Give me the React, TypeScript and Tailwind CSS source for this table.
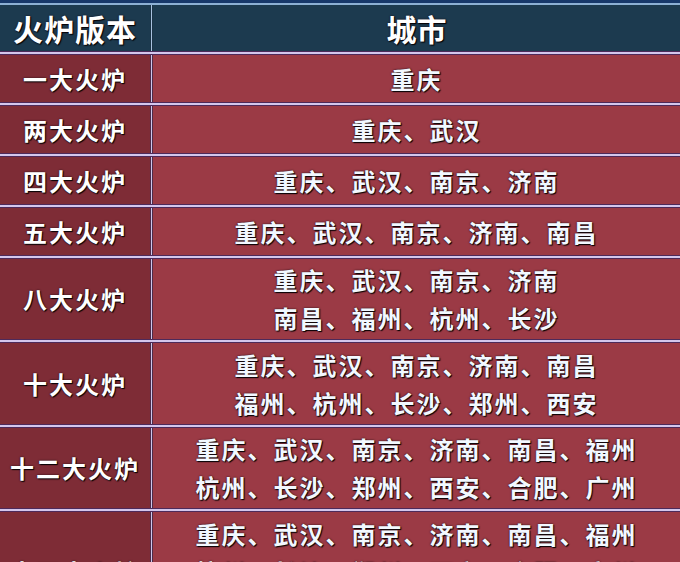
const rows: { label: string; lines: string[]; h: string }[] = [
  { label: "一大火炉", lines: ["重庆"], h: "h-[47px]" },
  { label: "两大火炉", lines: ["重庆、武汉"], h: "h-[47px]" },
  { label: "四大火炉", lines: ["重庆、武汉、南京、济南"], h: "h-[47px]" },
  { label: "五大火炉", lines: ["重庆、武汉、南京、济南、南昌"], h: "h-[47px]" },
  {
    label: "八大火炉",
    lines: ["重庆、武汉、南京、济南", "南昌、福州、杭州、长沙"],
    h: "h-[80px]",
  },
  {
    label: "十大火炉",
    lines: ["重庆、武汉、南京、济南、南昌", "福州、杭州、长沙、郑州、西安"],
    h: "h-[81px]",
  },
  {
    label: "十二大火炉",
    lines: ["重庆、武汉、南京、济南、南昌、福州", "杭州、长沙、郑州、西安、合肥、广州"],
    h: "h-[80px]",
  },
  {
    label: "十四大火炉",
    lines: [
      "重庆、武汉、南京、济南、南昌、福州",
      "杭州、长沙、郑州、西安、合肥、广州",
      "南宁、海口",
    ],
    h: "h-[120px]",
  },
];

const shadow = "[text-shadow:0_0_2px_#1a0a10,1px_1px_1px_#000]";

function Separator() {
  return <div className="h-[4px] bg-[#d4c6ec] border-y border-[#4d2a5a]" />;
}

function Divider({ dark }: { dark?: boolean }) {
  return (
    <div
      className={
        dark
          ? "w-[3px] bg-[#a9c2e0] border-x border-[#1a3346]"
          : "w-[3px] bg-[#cfc6ea] border-x border-[#4d2a48]"
      }
    />
  );
}

export default function App() {
  return (
    <div className="w-[680px] h-[562px] overflow-hidden bg-[#9a3a44] font-['Noto_Sans_CJK_SC',sans-serif] font-bold text-white">
      <div className="h-[3px] bg-[#17386a]" />
      <div className="h-[2px] bg-[#8cb0d4]" />

      <div className="flex h-[46px] bg-[#1c3a4f]">
        <div
          className={`w-[150px] flex items-center justify-center text-[30px] tracking-[1px] ${shadow}`}
        >
          火炉版本
        </div>
        <Divider dark />
        <div
          className={`flex-1 flex items-center justify-center text-[30px] ${shadow}`}
        >
          城市
        </div>
      </div>

      {rows.map((row) => (
        <div key={row.label}>
          <Separator />
          <div className={`flex ${row.h}`}>
            <div
              className={`w-[150px] flex items-center justify-center bg-[#7e2c36] text-[24px] tracking-[2px] ${shadow}`}
            >
              {row.label}
            </div>
            <Divider />
            <div className="flex-1 flex flex-col items-center justify-center bg-[#9b3a45]">
              {row.lines.map((line) => (
                <div
                  key={line}
                  className={`text-[24px] leading-[38px] tracking-[2px] text-[#f2f8ff] ${shadow}`}
                >
                  {line}
                </div>
              ))}
            </div>
          </div>
        </div>
      ))}
    </div>
  );
}
